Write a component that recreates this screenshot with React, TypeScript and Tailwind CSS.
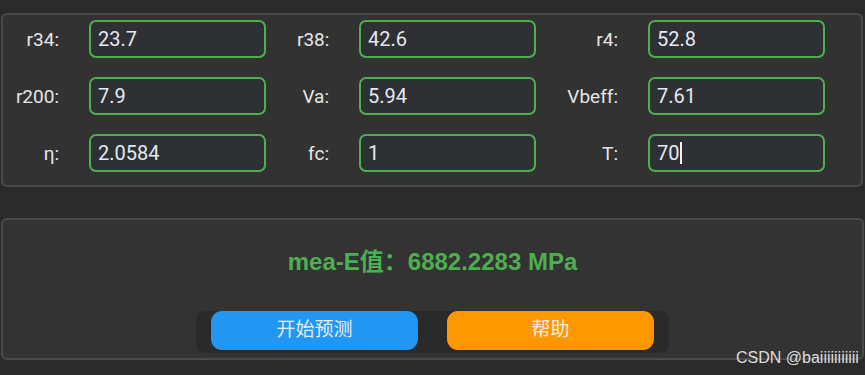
import React from 'react';

const rows = [
  [
    { label: 'r34:', value: '23.7' },
    { label: 'r38:', value: '42.6' },
    { label: 'r4:', value: '52.8' },
  ],
  [
    { label: 'r200:', value: '7.9' },
    { label: 'Va:', value: '5.94' },
    { label: 'Vbeff:', value: '7.61' },
  ],
  [
    { label: 'η:', value: '2.0584' },
    { label: 'fc:', value: '1' },
    { label: 'T:', value: '70', focused: true },
  ],
];

const labelWidths = ['w-[56px]', 'w-[32px]', 'w-[51px]'];

const Field = ({ value, focused }: { value: string; focused?: boolean }) => (
  <div className="w-[177px] h-[38px] rounded-[7px] border-2 border-[#4caf50] bg-[#2f3033] flex items-center pl-[7px] text-[#e3e9f2] text-[20px] leading-none">
    <span>{value}</span>
    {focused && <span className="ml-[1px] w-[2px] h-[22px] bg-[#f2f2f2]" />}
  </div>
);

export default function App() {
  return (
    <div
      className="relative w-[865px] h-[375px] bg-[#2b2b2b] overflow-hidden pt-[13px] px-[1px]"
      style={{ fontFamily: 'Roboto, "Noto Sans CJK SC", sans-serif' }}
    >
      <div className="w-[862px] h-[174px] rounded-[6px] border-2 border-[#4a4a4a] bg-[#323232] pt-[5px] flex flex-col gap-[19px]">
        {rows.map((row, r) => (
          <div key={r} className="flex items-center">
            {row.map((f, c) => (
              <div key={c} className="flex items-center gap-[30px] mr-[31px]">
                <span
                  className={`${labelWidths[c]} text-right text-[19px] text-[#e6e6e6] leading-none`}
                >
                  {f.label}
                </span>
                <Field value={f.value} focused={f.focused} />
              </div>
            ))}
          </div>
        ))}
      </div>

      <div className="mt-[31px] w-[863px] h-[142px] rounded-[6px] border-2 border-[#4a4a4a] bg-[#333333] flex flex-col items-center">
        <div
          className="mt-[30px] text-[24px] font-bold text-[#4caf50] leading-none"
          style={{ fontFamily: '"Liberation Sans", "Noto Sans CJK SC", sans-serif' }}
        >
          mea-E值：6882.2283 MPa
        </div>
        <div className="mt-[37px] flex gap-[29px] px-[15px] pb-[3px] rounded-[9px] bg-[#2a2a2a]">
          <button className="w-[207px] h-[39px] rounded-[11px] bg-[#2196f3] text-[#e9eef3] text-[19px]">
            开始预测
          </button>
          <button className="w-[207px] h-[39px] rounded-[11px] bg-[#ff9800] text-[#f3ede4] text-[19px]">
            帮助
          </button>
        </div>
      </div>

      <div
        className="absolute left-[736px] top-[350px] text-[16px] text-[#dedede] leading-none"
        style={{ fontFamily: '"Liberation Sans", sans-serif' }}
      >
        CSDN @baiiiiiiiiiii
      </div>
    </div>
  );
}
